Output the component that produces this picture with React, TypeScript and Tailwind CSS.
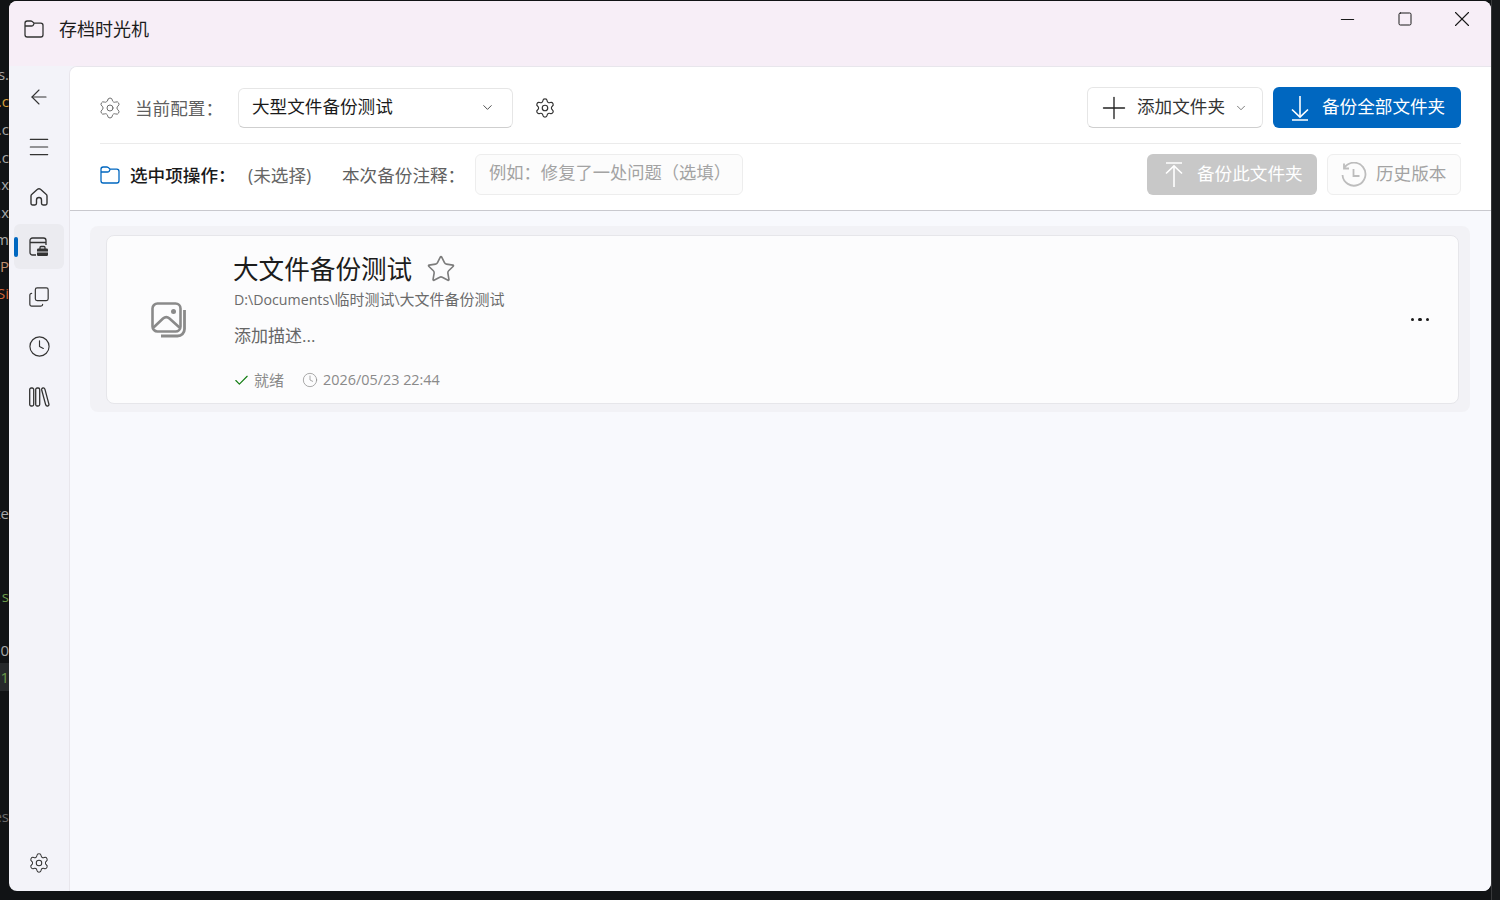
import { ChevronDown, Minus, Square, X, Settings, ArrowLeft, Menu, Copy, Clock, Check, Star, Plus } from "lucide-react";

const fontCls = "font-['Open_Sans','Noto_Sans_CJK_SC',sans-serif]";

function FolderIcon({ className }: { className: string }) {
  return (
    <svg viewBox="0 0 20 18" fill="none" stroke="currentColor" strokeWidth="1.3" className={className}>
      <path d="M1 3.2C1 2 2 1 3.2 1h3.6c.5 0 1 .2 1.4.5L10.2 3.2h6.6c1.2 0 2.2 1 2.2 2.2v9.4c0 1.2-1 2.2-2.2 2.2H3.2C2 17 1 16 1 14.8V3.2Z" />
      <path d="M1 6h6.6c.5 0 1-.2 1.4-.5l1.2-2.3" />
    </svg>
  );
}

function HomeIcon() {
  return (
    <svg viewBox="0 0 20 20" fill="none" stroke="currentColor" strokeWidth="1.4" className="h-[20px] w-[20px]">
      <path d="M8.5 2.3a2.3 2.3 0 0 1 3 0l5.6 4.9c.6.5.9 1.2.9 1.9v7.2c0 .9-.7 1.7-1.6 1.7h-2.3c-.9 0-1.6-.8-1.6-1.7V13a2.5 2.5 0 0 0-5 0v3.3c0 .9-.7 1.7-1.6 1.7H3.6c-.9 0-1.6-.8-1.6-1.7V9.1c0-.7.3-1.4.9-1.9l5.6-4.9Z" />
    </svg>
  );
}

function BackupNavIcon() {
  return (
    <svg viewBox="0 0 20 20" className="h-[20px] w-[20px]">
      <path d="M8 18H3.5C2.1 18 1 16.9 1 15.5V3.5C1 2.1 2.1 1 3.5 1h11C16 1 17 2.1 17 3.5V9" fill="none" stroke="currentColor" strokeWidth="1.3" />
      <path d="M1 5.5h16" fill="none" stroke="currentColor" strokeWidth="1.3" />
      <rect x="7" y="8" width="13" height="12" fill="#ebebf0" />
      <path d="M11 12V10.5c0-.6.4-1 1-1h3c.6 0 1 .4 1 1V12" fill="none" stroke="currentColor" strokeWidth="1.3" />
      <rect x="8" y="11.5" width="11" height="7.5" rx="1.2" fill="currentColor" />
      <path d="M8 15h11" stroke="#ebebf0" strokeWidth="0.9" />
    </svg>
  );
}

function LibraryIcon() {
  return (
    <svg viewBox="0 0 21 20" fill="none" stroke="currentColor" strokeWidth="1.3" className="h-[20px] w-[21px]">
      <rect x="0.7" y="1" width="4" height="18" rx="1.5" />
      <rect x="6.7" y="1" width="4" height="18" rx="1.5" />
      <path d="M12.7 3c-.2-1 .3-1.8 1.2-2s1.7.3 2 1.2l4 15c.2 1-.3 1.6-1.2 1.8s-1.7-.3-2-1.2L12.7 3Z" />
    </svg>
  );
}

function ImagesIcon() {
  return (
    <svg viewBox="0 0 36 36" fill="none" stroke="#8a8a8a" strokeWidth="2.6" className="h-[36px] w-[36px]">
      <rect x="1.5" y="1.5" width="28" height="28" rx="5" />
      <path d="M2.5 25.5 12 16.5c2-1.8 4.5-1.8 6.5 0l10 9" />
      <circle cx="22.5" cy="9.5" r="2.5" fill="#8a8a8a" stroke="none" />
      <path d="M33.5 8v19c0 4-3 7-7 7H10" strokeWidth="2.8" />
    </svg>
  );
}

function HistoryIcon() {
  return (
    <svg viewBox="0 0 26 26" fill="none" stroke="#bdbdbd" strokeWidth="1.8" className="h-[26px] w-[26px]">
      <path d="M3.6 5.5A11.5 11.5 0 1 1 1.5 13" />
      <path d="M3 1.5v5h5" />
      <path d="M12.5 7v7h6" />
    </svg>
  );
}

function UploadLine() {
  return (
    <svg viewBox="0 0 20 26" fill="none" stroke="currentColor" strokeWidth="1.6" className="h-[26px] w-[20px]">
      <path d="M2 1h16" />
      <path d="M10 25V4" />
      <path d="M2 11.5 10 3.8l8 7.7" />
    </svg>
  );
}

function DownloadLine() {
  return (
    <svg viewBox="0 0 20 26" fill="none" stroke="currentColor" strokeWidth="1.6" className="h-[26px] w-[20px]">
      <path d="M2 25h16" />
      <path d="M10 1v21" />
      <path d="M2 14.5l8 7.7 8-7.7" />
    </svg>
  );
}

const navIcons = [
  <ArrowLeft key="back" size={24} strokeWidth={1.1} />,
  <Menu key="menu" size={26} strokeWidth={1.1} />,
  <HomeIcon key="home" />,
  <BackupNavIcon key="backup" />,
  <Copy key="copy" size={22} strokeWidth={1.3} className="-scale-y-100" />,
  <Clock key="clock" size={23} strokeWidth={1.2} className="-mt-[1px]" />,
  <LibraryIcon key="library" />,
];

// bits of the editor showing behind the window on its left edge
const behind = [
  { t: "s.", top: 66, c: "text-[#a8a8a8]" },
  { t: ".c", top: 93, c: "text-[#d7a03c]" },
  { t: ".c", top: 121, c: "text-[#a8a8a8]" },
  { t: ".c", top: 149, c: "text-[#a8a8a8]" },
  { t: ".x", top: 176, c: "text-[#a8a8a8]" },
  { t: ".x", top: 204, c: "text-[#a8a8a8]" },
  { t: "m", top: 231, c: "text-[#a8a8a8]" },
  { t: "P", top: 258, c: "text-[#c09070]" },
  { t: "Si", top: 285, c: "text-[#d0653a]" },
  { t: "te", top: 505, c: "text-[#a8a8a8]" },
  { t: "s", top: 588, c: "text-[#6a9a4a]" },
  { t: "0", top: 642, c: "text-[#a8a8a8]" },
  { t: "1", top: 669, c: "text-[#6a9a4a]" },
  { t: "es", top: 808, c: "text-[#6a6a6a]" },
];

export default function App() {
  return (
    <div className={`relative h-[900px] w-[1500px] overflow-hidden bg-[#111315] ${fontCls}`}>
      <div className="absolute left-0 top-[663px] h-[28px] w-[9px] bg-[#26292b]" />
      <div className="absolute right-0 top-0 h-[900px] w-[9px] border-l border-[#38393b] bg-[#17191b]" />
      {behind.map((b, i) => (
        <span key={i} className={`absolute left-0 flex w-[9px] justify-end overflow-hidden whitespace-nowrap text-[15px] leading-[16px] ${b.c}`} style={{ top: b.top }}>
          {b.t}
        </span>
      ))}

      {/* app window */}
      <div className="absolute left-[9px] top-[1px] flex h-[890px] w-[1482px] flex-col overflow-hidden rounded-lg bg-[#f3f3f9]">
        <div className="flex h-[65px] shrink-0 items-start bg-[#f7eef7]">
          <div className="flex h-[56px] items-center pl-[15px] text-[#333]">
            <FolderIcon className="h-[18px] w-[20px]" />
            <span className="ml-[15px] text-[18px] text-[#1c1c1c]">存档时光机</span>
          </div>
          <div className="ml-auto flex h-[36px] items-center pr-[16px] text-[#1a1a1a]">
            <Minus size={21} strokeWidth={1.3} />
            <Square size={16} strokeWidth={1.5} className="ml-[39px]" />
            <X size={26} strokeWidth={1} className="ml-[36px]" />
          </div>
        </div>

        <div className="flex min-h-0 flex-1">
          <div className="flex w-[60px] shrink-0 flex-col pt-[6px] text-[#333]">
            {navIcons.map((icon, i) => (
              <div key={i} className="relative flex h-[50px] items-center justify-center">
                {i === 3 && <div className="absolute left-[5px] top-[2px] h-[45px] w-[50px] rounded-md bg-[#ebebf0]" />}
                {i === 3 && <div className="absolute left-[5px] top-[15px] h-[20px] w-[4px] rounded-full bg-[#0067c0]" />}
                <span className="relative">{icon}</span>
              </div>
            ))}
            <div className="mt-auto flex h-[50px] items-center justify-center pb-[6px]">
              <Settings size={22} strokeWidth={1.1} />
            </div>
          </div>

          <div className="flex min-w-0 flex-1 flex-col overflow-hidden rounded-tl-lg border-l border-t border-[#e8e6ec] bg-[#f8f9fd]">
            <div className="flex h-[144px] shrink-0 flex-col border-b border-[#c9c9ce] bg-white px-[30px] pt-[20px]">
              <div className="flex h-[41px] items-center">
                <Settings size={24} strokeWidth={1} className="-ml-[2px] text-[#6e6e6e]" />
                <span className="ml-[13px] mt-[2px] w-[103px] text-[17.6px] text-[#5f5f5f]">{"当前配置\uFF1A"}</span>
                <div className="flex h-[40px] w-[275px] items-center justify-between rounded-md border border-[#e6e6e6] border-b-[#cfcfcf] bg-white pl-[13px] pr-[17px]">
                  <span className="pb-[2px] text-[17.6px] text-[#1a1a1a]">大型文件备份测试</span>
                  <ChevronDown size={15} strokeWidth={1.5} className="text-[#444]" />
                </div>
                <Settings size={22} strokeWidth={1.3} className="ml-[21px] mt-[1px] text-[#333]" />
                <div className="ml-auto flex h-[41px] w-[176px] items-center rounded-md border border-[#e6e6e6] border-b-[#cfcfcf] bg-white pl-[8px]">
                  <Plus size={36} strokeWidth={0.9} className="text-[#222]" />
                  <span className="ml-[5px] pb-[2px] text-[17.6px] text-[#333]">添加文件夹</span>
                  <ChevronDown size={14} strokeWidth={1.3} className="ml-[9px] text-[#555]" />
                </div>
                <div className="ml-[10px] flex h-[41px] w-[188px] items-center rounded-md bg-[#0067c0] pl-[17px] text-white">
                  <DownloadLine />
                  <span className="ml-[12px] pb-[2px] text-[17.6px]">备份全部文件夹</span>
                </div>
              </div>
              <div className="mt-[15px] border-t border-[#ebebeb]" />
              <div className="mt-[10px] flex h-[41px] items-center">
                <FolderIcon className="h-[18px] w-[20px] text-[#0067c0]" />
                <span className="ml-[10px] mt-[2px] w-[118px] text-[17.6px] font-medium text-[#1a1a1a]">{"选中项操作\uFF1A"}</span>
                <span className="mt-[2px] w-[94px] text-[17.6px] text-[#666]">(未选择)</span>
                <span className="mt-[2px] w-[133px] text-[17.6px] text-[#5f5f5f]">{"本次备份注释\uFF1A"}</span>
                <div className="flex h-[41px] w-[268px] items-center rounded-md border border-[#ededed] bg-[#fcfcfc] pb-[3px] pl-[13px]">
                  <span className="text-[17.3px] text-[#a3a3a3]">{"例如\uFF1A修复了一处问题\uFF08选填\uFF09"}</span>
                </div>
                <div className="ml-auto flex h-[41px] w-[170px] items-center rounded-md bg-[#c8c8c8] pl-[17px] text-white">
                  <UploadLine />
                  <span className="ml-[13px] pb-[2px] text-[17.6px]">备份此文件夹</span>
                </div>
                <div className="ml-[10px] flex h-[41px] w-[134px] items-center rounded-md border border-[#eeeeee] bg-[#fcfcfc] pl-[13px]">
                  <HistoryIcon />
                  <span className="ml-[9px] pb-[2px] text-[17.6px] text-[#a3a3a3]">历史版本</span>
                </div>
              </div>
            </div>

            <div className="pl-[20px] pr-[21px] pt-[15px]">
              <div className="rounded-lg bg-[#f2f2f6] pb-[8px] pl-[16px] pr-[11px] pt-[9px]">
                <div className="flex h-[169px] items-center rounded-lg border border-[#e6e6ea] bg-[#fcfcfd] pr-[29px]">
                  <div className="flex w-[127px] shrink-0 items-center justify-center pr-[3px]">
                    <ImagesIcon />
                  </div>
                  <div className="flex h-full flex-col">
                    <div className="mt-[16px] flex h-[36px] items-center">
                      <span className="-ml-[1px] text-[25.6px] leading-[36px] text-[#1c1c1c]">大文件备份测试</span>
                      <Star size={30} strokeWidth={1.3} className="ml-[14px] -mt-[2px] text-[#7c7c7c]" />
                    </div>
                    <div className="text-[15px] leading-[22px] text-[#6b6b6b]">
                      <span className="text-[14.2px]">D:\Documents\</span>临时测试<span className="text-[14.2px]">\</span>大文件备份测试
                    </div>
                    <div className="mt-[12px] text-[17px] leading-[26px] text-[#666]">添加描述...</div>
                    <div className="mt-[20px] flex h-[22px] items-center text-[#8a8a8a]">
                      <Check size={17} strokeWidth={1.6} className="-ml-[1px] text-[#107c10]" />
                      <span className="ml-[4px] text-[15px]">就绪</span>
                      <Clock size={16} strokeWidth={1.1} className="ml-[18px]" />
                      <span className="ml-[5px] text-[14.4px]">2026/05/23 22:44</span>
                    </div>
                  </div>
                  <div className="ml-auto flex gap-[4px]">
                    <span className="h-[3.5px] w-[3.5px] rounded-full bg-[#1a1a1a]" />
                    <span className="h-[3.5px] w-[3.5px] rounded-full bg-[#1a1a1a]" />
                    <span className="h-[3.5px] w-[3.5px] rounded-full bg-[#1a1a1a]" />
                  </div>
                </div>
              </div>
            </div>
          </div>
        </div>
      </div>
    </div>
  );
}
